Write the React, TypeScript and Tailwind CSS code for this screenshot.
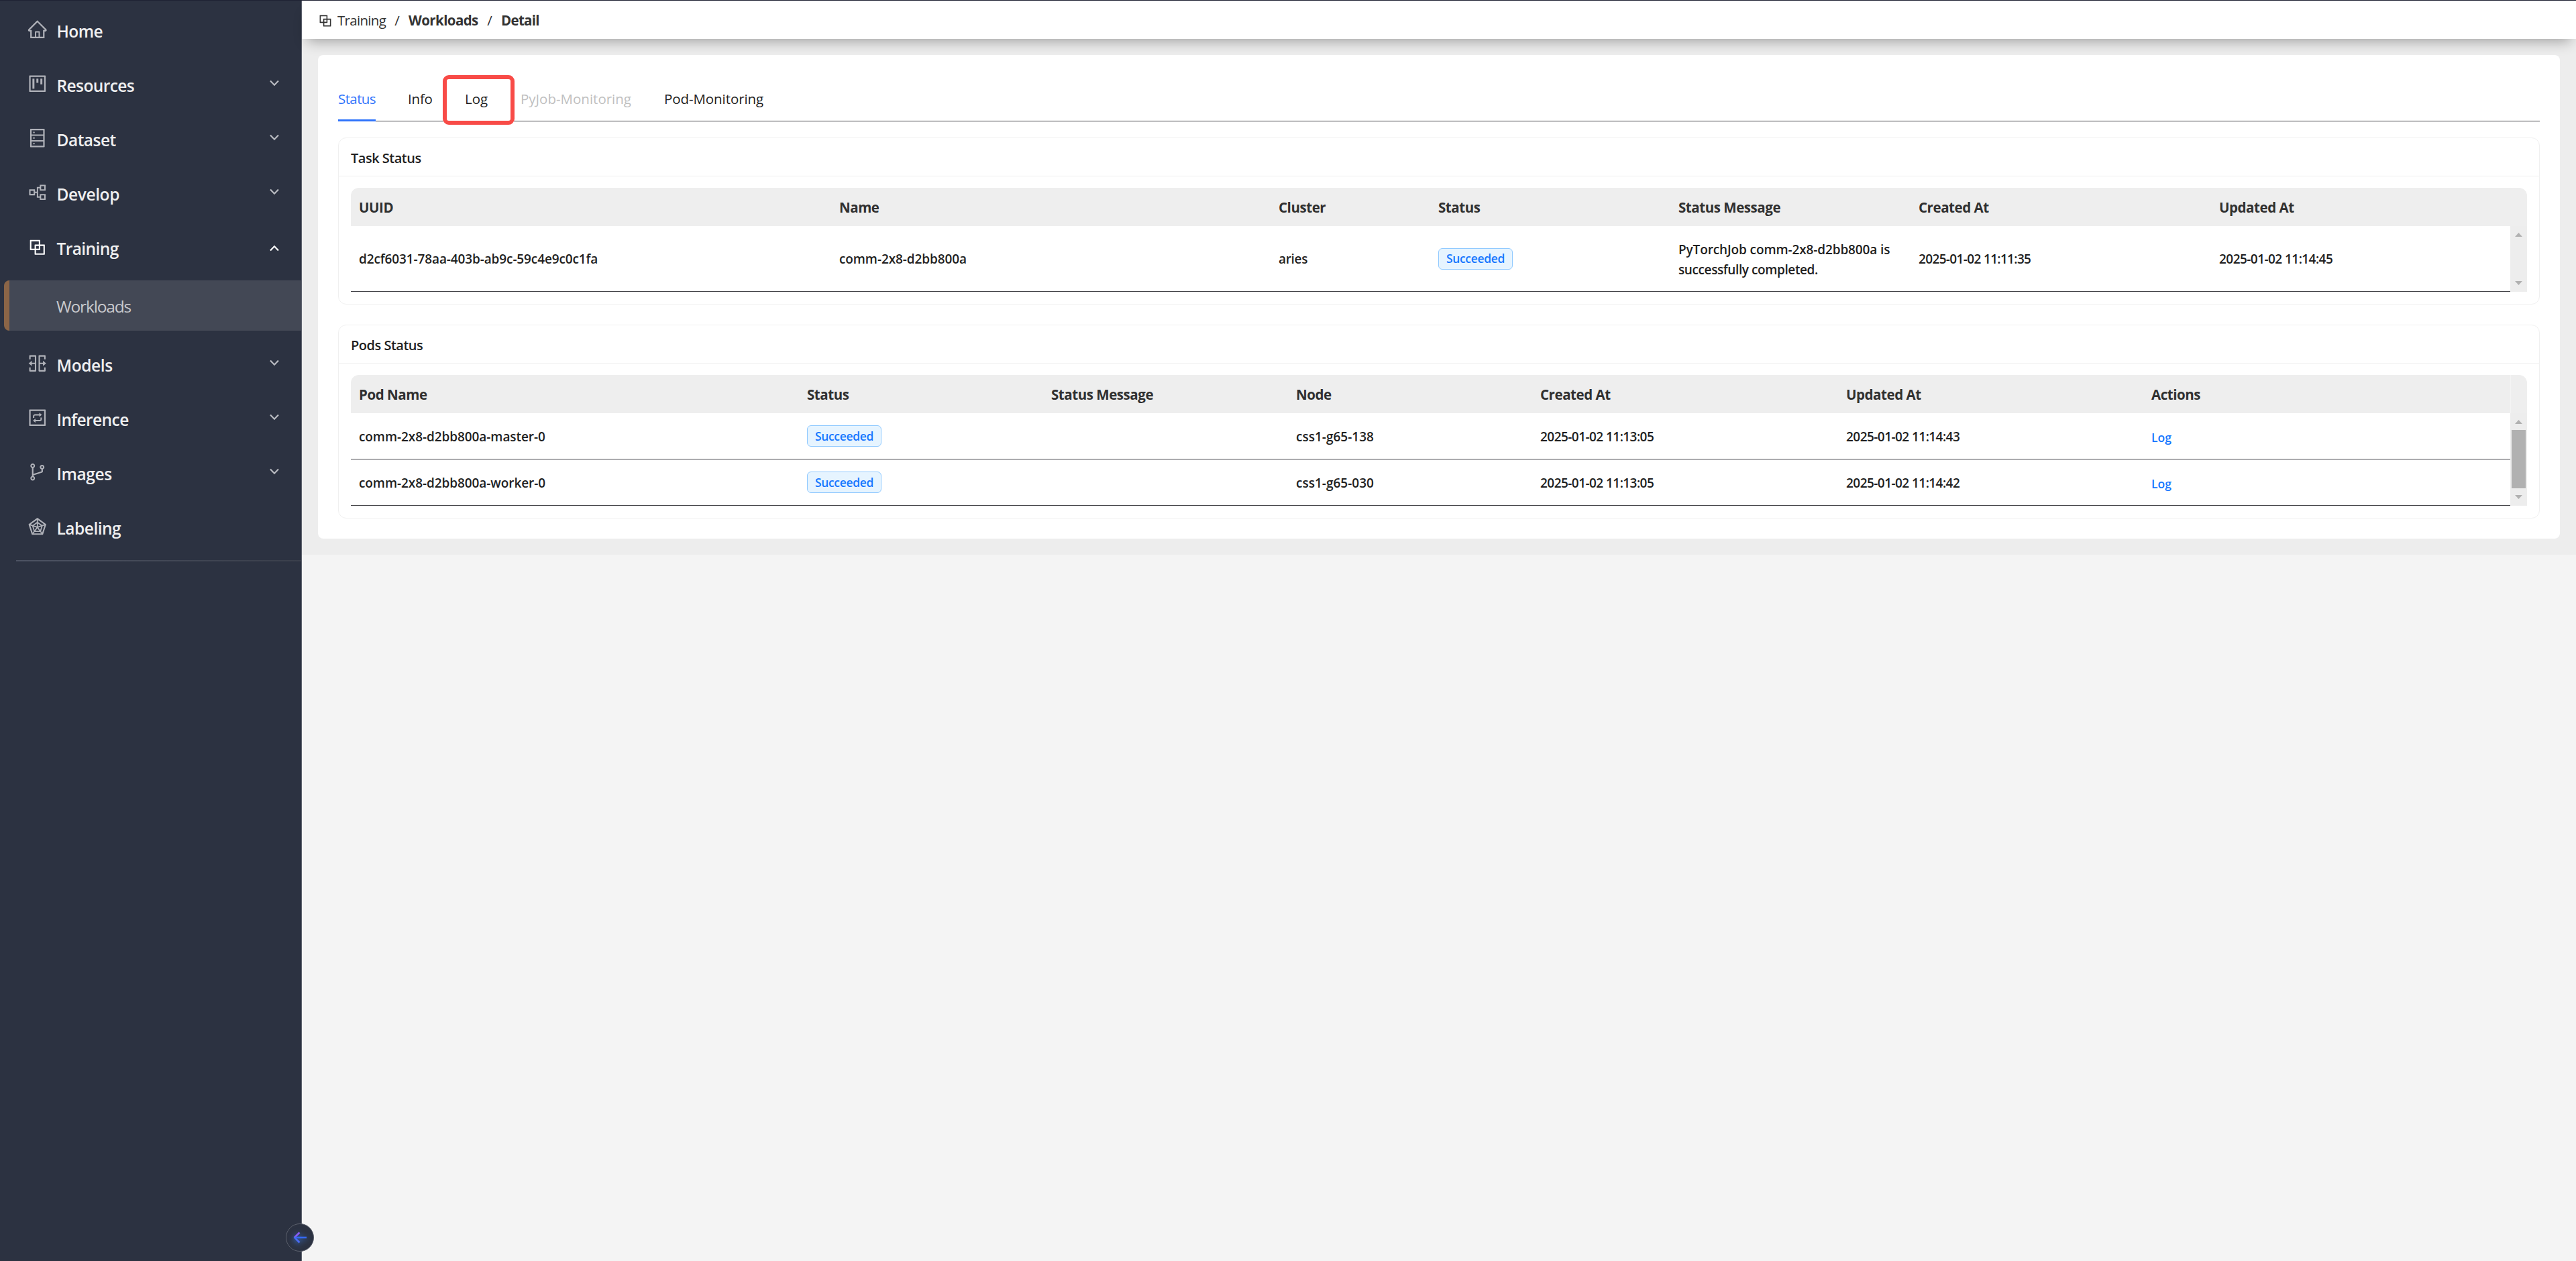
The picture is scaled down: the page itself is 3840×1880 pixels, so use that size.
import type { ReactNode } from 'react';
import type { IconType } from 'react-icons';
import {
  AiOutlineBlock,
  AiOutlineBranches,
  AiOutlineDatabase,
  AiOutlineHome,
  AiOutlineInteraction,
  AiOutlinePartition,
  AiOutlineProject,
  AiOutlineRadarChart,
  AiOutlineSplitCells,
} from 'react-icons/ai';

type NavItem = { label: string; icon: IconType; track: string; arrow?: boolean; open?: boolean; children?: string[] };
type Column = { title: string; width: string };

const nav: NavItem[] = [
  { label: 'Home', icon: AiOutlineHome, track: 'tracking-[-0.6px]' },
  { label: 'Resources', icon: AiOutlineProject, track: 'tracking-[-0.6px]', arrow: true },
  { label: 'Dataset', icon: AiOutlineDatabase, track: 'tracking-[-0.5px]', arrow: true },
  { label: 'Develop', icon: AiOutlinePartition, track: 'tracking-[-0.4px]', arrow: true },
  { label: 'Training', icon: AiOutlineBlock, track: 'tracking-[-0.6px]', arrow: true, open: true, children: ['Workloads'] },
  { label: 'Models', icon: AiOutlineSplitCells, track: 'tracking-[-0.4px]', arrow: true },
  { label: 'Inference', icon: AiOutlineInteraction, track: 'tracking-[-0.6px]', arrow: true },
  { label: 'Images', icon: AiOutlineBranches, track: 'tracking-[-0.4px]', arrow: true },
  { label: 'Labeling', icon: AiOutlineRadarChart, track: 'tracking-[-0.5px]' },
];

const taskColumns: Column[] = [
  { title: 'UUID', width: 'w-[716px]' },
  { title: 'Name', width: 'w-[655px]' },
  { title: 'Cluster', width: 'w-[238px]' },
  { title: 'Status', width: 'w-[358px]' },
  { title: 'Status Message', width: 'w-[358px]' },
  { title: 'Created At', width: 'w-[448px]' },
  { title: 'Updated At', width: 'w-[446px]' },
];

const podColumns: Column[] = [
  { title: 'Pod Name', width: 'w-[668px]' },
  { title: 'Status', width: 'w-[364px]' },
  { title: 'Status Message', width: 'w-[365px]' },
  { title: 'Node', width: 'w-[364px]' },
  { title: 'Created At', width: 'w-[456px]' },
  { title: 'Updated At', width: 'w-[455px]' },
  { title: 'Actions', width: 'w-[547px]' },
];

const pods = [
  { name: 'comm-2x8-d2bb800a-master-0', node: 'css1-g65-138', created: '2025-01-02 11:13:05', updated: '2025-01-02 11:14:43' },
  { name: 'comm-2x8-d2bb800a-worker-0', node: 'css1-g65-030', created: '2025-01-02 11:13:05', updated: '2025-01-02 11:14:42' },
];

function Chevron({ up }: { up?: boolean }) {
  return (
    <svg viewBox="0 0 14 10" className="h-[10px] w-[14px] shrink-0" fill="none" stroke={up ? '#ffffff' : '#b9bbc1'} strokeWidth="2.2">
      <path d={up ? 'M1 8.5 7 2.3l6 6.2' : 'M1 1.5 7 7.7l6-6.2'} />
    </svg>
  );
}

function Sidebar() {
  return (
    <aside className="relative w-[450px] shrink-0 border-r border-[#5b606c] bg-[#2c3241] pt-[5px] text-[24.5px]">
      {nav.map(({ label, icon: Icon, track, arrow, open, children }) => (
        <div key={label}>
          <div className="flex h-[81px] items-center pr-[33px] pl-10">
            <Icon className={open ? 'mb-1 size-[31.5px] text-white' : 'mb-[5px] size-[31.5px] text-[#b0b2b9]'} />
            <span className={`ml-[13px] flex-1 pt-0.5 font-semibold text-[#efeff0] ${track}`}>{label}</span>
            {arrow && <div className={open ? 'mb-px' : 'mb-[7px]'}><Chevron up={open} /></div>}
          </div>
          {children?.map(c => (
            <div key={c} className="mt-[7px] mb-[11px] ml-1.5 flex h-[75px] items-center rounded-l-[8px] border-l-8 border-[#8b6547] bg-[#434855] pt-[3px] pl-[70px] tracking-[-1.15px] text-[#c9cace]">
              {c}
            </div>
          ))}
        </div>
      ))}
      <div className="mt-[7px] ml-6 h-[2px] bg-linear-to-r from-[#4d5363] to-[#3a3f4b]" />
      {/* collapse handle */}
      <button className="absolute right-[-19px] bottom-[14px] z-20 flex size-[42px] items-center justify-center rounded-full border border-[#5b606c] bg-[#2c3241]">
        <svg viewBox="0 0 20 18" className="h-[18px] w-5 drop-shadow-[0_2px_4px_rgba(59,130,246,0.8)]" fill="none" strokeWidth="2.6">
          <path d="M9.5 1.5 2 9" stroke="#8b5cf6" />
          <path d="M1.5 8.4 9.5 16.5" stroke="#4b6cf6" />
          <path d="M3.5 9H20" stroke="#3568f0" />
        </svg>
      </button>
    </aside>
  );
}

function Tag({ children }: { children: ReactNode }) {
  return (
    <span className="flex h-8 w-[111px] items-center justify-center rounded-[6px] border border-[#91caff] bg-[#e6f4ff] text-[17.5px] tracking-[-0.35px] text-[#1677ff]">
      {children}
    </span>
  );
}

function Scrollbar({ thumb }: { thumb?: boolean }) {
  return (
    <div className="flex w-[25px] flex-col items-center justify-between bg-[#ededed] py-[10px]">
      <svg viewBox="0 0 11 6" className="h-1.5 w-[11px]" fill="#b1b1b1"><path d="M5.5 0 11 6H0z" /></svg>
      {thumb && <div className="mb-0.5 h-[87px] w-[21px] bg-[#b1b1b1]" />}
      <svg viewBox="0 0 11 6" className="h-1.5 w-[11px]" fill="#b1b1b1"><path d="M5.5 6 11 0H0z" /></svg>
    </div>
  );
}

function Table({ columns, thumb, children }: { columns: Column[]; thumb?: boolean; children: ReactNode }) {
  return (
    <div>
      <div className="flex h-[57px] items-center rounded-t-[12px] bg-[#eeeeee] text-[20.5px] font-bold tracking-[-0.45px] text-[#303030]">
        {columns.map(c => (
          <div key={c.title} className={`${c.width} shrink-0 pt-0.5 pl-3`}>{c.title}</div>
        ))}
        {thumb && <div className="h-full w-px bg-[#f4f4f4]" />}
      </div>
      <div className="flex">
        <div className="flex-1 text-[19px] font-semibold text-[#1f1f1f]">{children}</div>
        <Scrollbar thumb={thumb} />
      </div>
    </div>
  );
}

function Card({ title, children }: { title: string; children: ReactNode }) {
  return (
    <section className="rounded-[12px] border border-[#f0f0f0]">
      <h2 className="flex h-[57px] items-center border-b border-[#f0f0f0] pt-[3px] pl-[18px] text-[20px] font-semibold tracking-[-0.5px] text-[#1f1f1f]">
        {title}
      </h2>
      <div className="px-[18px] pt-[17px] pb-[18px]">{children}</div>
    </section>
  );
}

function Cell({ col, style = 'pt-0.5', children }: { col: Column; style?: string; children?: ReactNode }) {
  return <div className={`${col.width} ${style} shrink-0 pl-3`}>{children}</div>;
}

export default function App() {
  return (
    <div className="flex h-[1880px] w-[3840px] flex-col overflow-hidden bg-[#f4f4f4] font-['Open_Sans',sans-serif]">
      <div className="h-px shrink-0 bg-[#1f2233]" />
      <div className="flex flex-1">
        <Sidebar />
        <main className="flex-1">
          <header className="relative z-10 flex h-[57px] items-center bg-white pt-px pl-[23px] text-[20.5px] text-[#333333] shadow-[0_12px_20px_-8px_rgba(0,0,0,0.32)]">
            <AiOutlineBlock className="mt-px size-6" />
            <span className="ml-1.5 w-[72px] tracking-[-0.7px]">Training</span>
            <span className="w-[34px] text-center">/</span>
            <span className="w-[104px] font-bold tracking-[-0.6px]">Workloads</span>
            <span className="w-[34px] text-center">/</span>
            <span className="font-bold tracking-[-0.7px]">Detail</span>
          </header>

          <div className="bg-[#ededed] p-6">
            <div className="rounded-[8px] bg-white p-[30px]">
              <nav className="mb-6 flex h-[69px] gap-12 border-b border-[#404045] text-[20.5px] text-[#1f1f1f]">
                <a className="-mb-px flex w-14 items-center border-b-3 border-[#2f73fb] pt-[5px] tracking-[-0.6px] whitespace-nowrap text-[#2f73fb]">Status</a>
                <a className="flex w-[37px] items-center pt-[3px] tracking-[-0.2px]">Info</a>
                <a className="relative flex w-[35px] items-center pt-[3px]">
                  Log
                  <span className="absolute top-0 left-[-33px] h-[74px] w-[107px] rounded-[9px] border-6 border-[#f84b47]" />
                </a>
                <a className="flex w-[166px] items-center pt-[3px] whitespace-nowrap text-[#bfbfbf]">PyJob-Monitoring</a>
                <a className="flex w-[148px] items-center pt-[3px] tracking-[-0.08px] whitespace-nowrap">Pod-Monitoring</a>
              </nav>

              <div className="flex flex-col gap-[30px]">
                <Card title="Task Status">
                  <Table columns={taskColumns}>
                    <div className="flex h-[98px] items-center border-b border-[#404045]">
                      <Cell col={taskColumns[0]} style="pt-0.5 tracking-[-0.12px]">d2cf6031-78aa-403b-ab9c-59c4e9c0c1fa</Cell>
                      <Cell col={taskColumns[1]} style="pt-0.5 tracking-[-0.1px]">comm-2x8-d2bb800a</Cell>
                      <Cell col={taskColumns[2]} style="pt-0.5 tracking-[-0.3px]">aries</Cell>
                      <Cell col={taskColumns[3]} style="pt-0"><Tag>Succeeded</Tag></Cell>
                      <Cell col={taskColumns[4]} style="pt-0.5 leading-[30px]">
                        <div className="tracking-[-0.12px] whitespace-nowrap">PyTorchJob comm-2x8-d2bb800a is</div>
                        <div className="tracking-[-0.4px] whitespace-nowrap">successfully completed.</div>
                      </Cell>
                      <Cell col={taskColumns[5]} style="pt-0.5 tracking-[-0.65px]">2025-01-02 11:11:35</Cell>
                      <Cell col={taskColumns[6]} style="pt-0.5 tracking-[-0.55px]">2025-01-02 11:14:45</Cell>
                    </div>
                  </Table>
                </Card>

                <Card title="Pods Status">
                  <Table columns={podColumns} thumb>
                    {pods.map(p => (
                      <div key={p.name} className="flex h-[69px] items-center border-b border-[#404045]">
                        <Cell col={podColumns[0]} style="pt-0.5 tracking-[-0.08px]">{p.name}</Cell>
                        <Cell col={podColumns[1]} style="pt-0"><Tag>Succeeded</Tag></Cell>
                        <Cell col={podColumns[2]} />
                        <Cell col={podColumns[3]} style="pt-0.5">{p.node}</Cell>
                        <Cell col={podColumns[4]} style="pt-0.5 tracking-[-0.55px]">{p.created}</Cell>
                        <Cell col={podColumns[5]} style="pt-0.5 tracking-[-0.55px]">{p.updated}</Cell>
                        <Cell col={podColumns[6]} style="pt-1">
                          <a className="block text-[17.5px] text-[#1677ff]">Log</a>
                        </Cell>
                      </div>
                    ))}
                  </Table>
                </Card>
              </div>
            </div>
          </div>
        </main>
      </div>
    </div>
  );
}
